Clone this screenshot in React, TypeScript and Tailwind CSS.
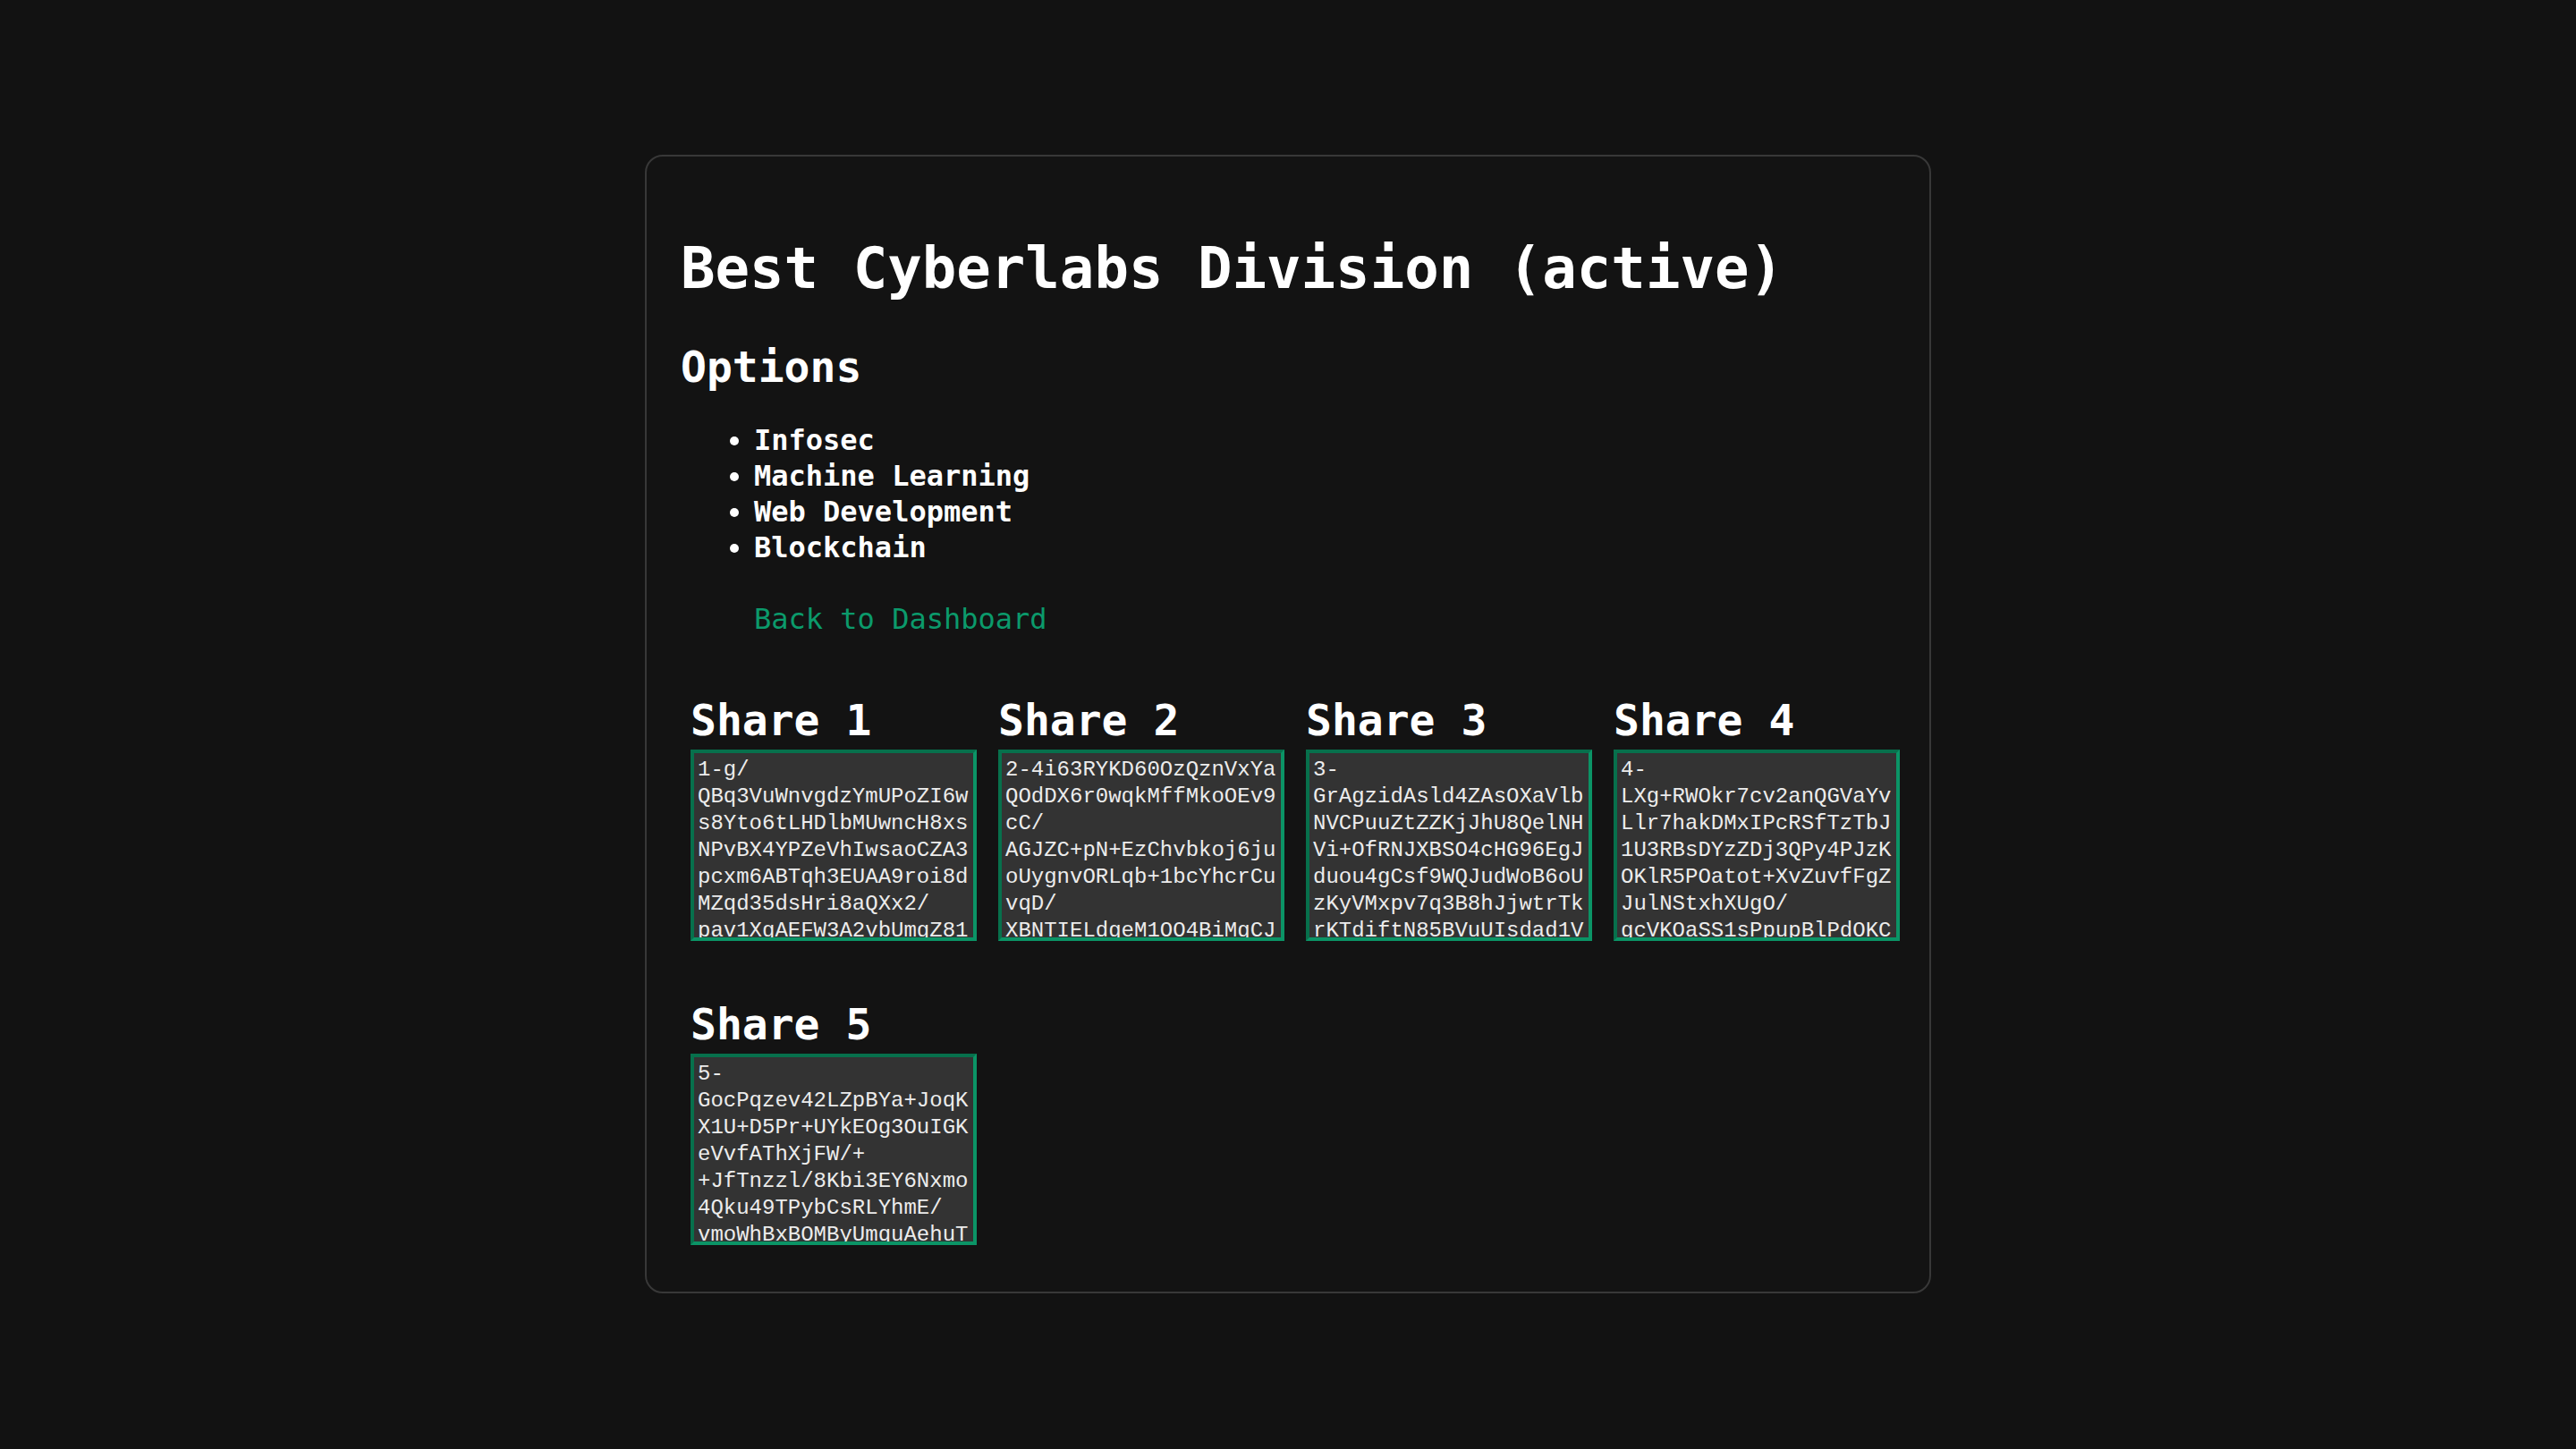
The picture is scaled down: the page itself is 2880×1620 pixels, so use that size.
import React from "react";

const options = ["Infosec", "Machine Learning", "Web Development", "Blockchain"];

// each share is kept line by line so the wrap matches the screenshot
const shares: string[][] = [
  [
    "1-g/",
    "QBq3VuWnvgdzYmUPoZI6w",
    "s8Yto6tLHDlbMUwncH8xs",
    "NPvBX4YPZeVhIwsaoCZA3",
    "pcxm6ABTqh3EUAA9roi8d",
    "MZqd35dsHri8aQXx2/",
    "pav1XgAEFW3A2vbUmgZ81",
    "kQ7rTn2WvLpX9sBdE4yHc",
  ],
  [
    "2-4i63RYKD60OzQznVxYa",
    "QOdDX6r0wqkMffMkoOEv9",
    "cC/",
    "AGJZC+pN+EzChvbkoj6ju",
    "oUygnvORLqb+1bcYhcrCu",
    "vqD/",
    "XBNTIELdgeM1OO4BiMgCJ",
    "t5HwZ8pQmR3sLk0vNaYe=",
  ],
  [
    "3-",
    "GrAgzidAsld4ZAsOXaVlb",
    "NVCPuuZtZZKjJhU8QelNH",
    "Vi+OfRNJXBSO4cHG96EgJ",
    "duou4gCsf9WQJudWoB6oU",
    "zKyVMxpv7q3B8hJjwtrTk",
    "rKTdiftN85BVuUIsdad1V",
    "Wm2pQx7LcH9eYb4nZs0g=",
  ],
  [
    "4-",
    "LXg+RWOkr7cv2anQGVaYv",
    "Llr7hakDMxIPcRSfTzTbJ",
    "1U3RBsDYzZDj3QPy4PJzK",
    "OKlR5POatot+XvZuvfFgZ",
    "JulNStxhXUgO/",
    "gcVKOaSS1sPpupBlPdOKC",
    "e8Tn3Hq5WzLr0mVx2YbA=",
  ],
  [
    "5-",
    "GocPqzev42LZpBYa+JoqK",
    "X1U+D5Pr+UYkEOg3OuIGK",
    "eVvfAThXjFW/+",
    "+JfTnzzl/8Kbi3EY6Nxmo",
    "4Qku49TPybCsRLYhmE/",
    "vmoWhBxBOMByUmquAehuT",
    "j6Rc1Ns9Lp0QwZ7kXd4f=",
  ],
];

function Share({ index, lines }: { index: number; lines: string[] }) {
  return (
    <div className="flex flex-col">
      <h2 className="text-[48px] leading-[48px] font-bold text-white">Share {index}</h2>
      <textarea
        readOnly
        value={lines.join("\n")}
        className="mt-[9px] block h-[214px] w-[320px] resize-none overflow-hidden border-4 border-t-[#07704c] border-l-[#07704c] border-r-[#0b9466] border-b-[#0b9466] bg-[#333333] p-[4px] font-['Liberation_Mono',monospace] text-[24px] leading-[30px] text-[#ececec] outline-none"
      />
    </div>
  );
}

export default function App() {
  return (
    <main className="min-h-screen w-full bg-[#121212] pt-[173px] font-['DejaVu_Sans_Mono',monospace] text-white">
      <section className="mx-auto w-[1438px] rounded-[20px] border-2 border-[#383838] bg-[#131313] pt-[93px] pb-[52px] pl-[38px]">
        <h1 className="text-[64px] leading-[64px] font-bold">Best Cyberlabs Division (active)</h1>

        <h2 className="mt-[54px] text-[48px] leading-[48px] font-bold">Options</h2>
        <ul className="mt-[38px] list-disc pl-[82px] text-[32px] leading-[40px] font-bold">
          {options.map((o) => (
            <li key={o}>{o}</li>
          ))}
        </ul>

        <a href="#" className="mt-[40px] ml-[82px] block w-fit text-[32px] leading-[40px] text-[#0b9a6b]">
          Back to Dashboard
        </a>

        {/* shares */}
        <div className="mt-[69px] ml-[11px] grid grid-cols-[repeat(4,320px)] gap-x-[24px] gap-y-[69px]">
          {shares.map((s, i) => (
            <Share key={i} index={i + 1} lines={s} />
          ))}
        </div>
      </section>
    </main>
  );
}
